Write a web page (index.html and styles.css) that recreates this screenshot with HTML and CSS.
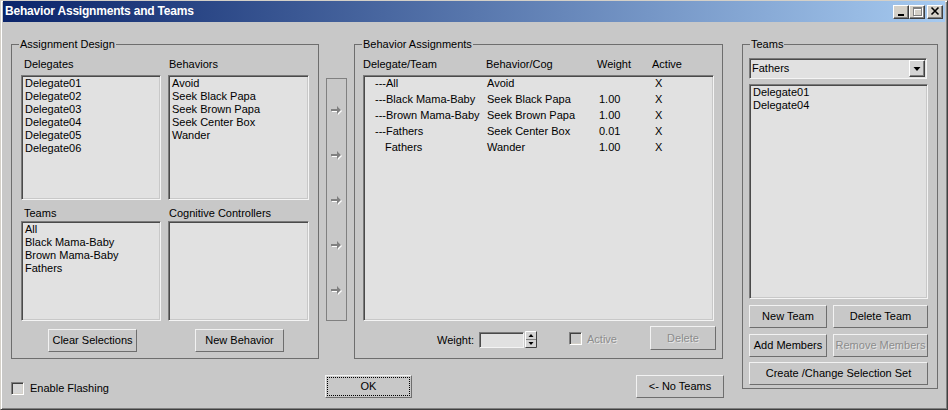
FILE: index.html
```html
<!DOCTYPE html>
<html>
<head>
<meta charset="utf-8">
<title>Behavior Assignments and Teams</title>
<link rel="stylesheet" href="styles.css">
</head>
<body>
<div class="window">
  <div class="titlebar">
    <span class="title">Behavior Assignments and Teams</span>
    <div class="tb-buttons">
      <span class="tbtn"><svg width="14" height="12" viewBox="0 0 14 12"><rect x="4" y="8" width="6" height="2" fill="#000"/></svg></span>
      <span class="tbtn"><svg width="14" height="12" viewBox="0 0 14 12"><path d="M4 2h9v9H4z M5 4v6h7V4z" fill="#fff" fill-rule="evenodd"/><path d="M3 1h9v9H3z M4 3v6h7V3z" fill="#808080" fill-rule="evenodd"/></svg></span>
      <span class="tbtn tclose"><svg width="14" height="12" viewBox="0 0 14 12"><path d="M3.5 1.5L10.5 8.5M10.5 1.5L3.5 8.5" stroke="#000" stroke-width="1.6"/></svg></span>
    </div>
  </div>

  <div class="content">
    <section class="group design">
      <div class="gtitle">Assignment Design</div>
      <div class="gbody design-body">
        <div class="design-grid">
          <div class="cell c1">
            <div class="lbl">Delegates</div>
            <div class="listbox tall">
              <div>Delegate01</div><div>Delegate02</div><div>Delegate03</div>
              <div>Delegate04</div><div>Delegate05</div><div>Delegate06</div>
            </div>
          </div>
          <div class="cell c2">
            <div class="lbl">Behaviors</div>
            <div class="listbox tall">
              <div>Avoid</div><div>Seek Black Papa</div><div>Seek Brown Papa</div>
              <div>Seek Center Box</div><div>Wander</div>
            </div>
          </div>
          <div class="cell c1 low">
            <div class="lbl">Teams</div>
            <div class="listbox short">
              <div>All</div><div>Black Mama-Baby</div><div>Brown Mama-Baby</div><div>Fathers</div>
            </div>
          </div>
          <div class="cell c2 low">
            <div class="lbl">Cognitive Controllers</div>
            <div class="listbox short"></div>
          </div>
          <div class="bcell"><button class="btn dbtn">Clear Selections</button></div>
          <div class="bcell"><button class="btn dbtn">New Behavior</button></div>
        </div>
      </div>
    </section>

    <div class="arrows">
      <div class="arrow"><svg width="11" height="9" viewBox="0 0 11 9"><path d="M1 4h6V1l4 4-4 4V6H1z" fill="#fff"/><path d="M0 3h6V0l4 4-4 4V5H0z" fill="#808080"/></svg></div>
      <div class="arrow"><svg width="11" height="9" viewBox="0 0 11 9"><path d="M1 4h6V1l4 4-4 4V6H1z" fill="#fff"/><path d="M0 3h6V0l4 4-4 4V5H0z" fill="#808080"/></svg></div>
      <div class="arrow"><svg width="11" height="9" viewBox="0 0 11 9"><path d="M1 4h6V1l4 4-4 4V6H1z" fill="#fff"/><path d="M0 3h6V0l4 4-4 4V5H0z" fill="#808080"/></svg></div>
      <div class="arrow"><svg width="11" height="9" viewBox="0 0 11 9"><path d="M1 4h6V1l4 4-4 4V6H1z" fill="#fff"/><path d="M0 3h6V0l4 4-4 4V5H0z" fill="#808080"/></svg></div>
      <div class="arrow"><svg width="11" height="9" viewBox="0 0 11 9"><path d="M1 4h6V1l4 4-4 4V6H1z" fill="#fff"/><path d="M0 3h6V0l4 4-4 4V5H0z" fill="#808080"/></svg></div>
    </div>

    <section class="group assign">
      <div class="gtitle">Behavior Assignments</div>
      <div class="gbody assign-body">
        <div class="thead">
          <span>Delegate/Team</span><span>Behavior/Cog</span><span>Weight</span><span>Active</span>
        </div>
        <div class="listbox lv">
          <div class="lvrow"><span>---All</span><span>Avoid</span><span></span><span>X</span></div>
          <div class="lvrow"><span>---Black Mama-Baby</span><span>Seek Black Papa</span><span>1.00</span><span>X</span></div>
          <div class="lvrow"><span>---Brown Mama-Baby</span><span>Seek Brown Papa</span><span>1.00</span><span>X</span></div>
          <div class="lvrow"><span>---Fathers</span><span>Seek Center Box</span><span>0.01</span><span>X</span></div>
          <div class="lvrow"><span class="ind">Fathers</span><span>Wander</span><span>1.00</span><span>X</span></div>
        </div>
        <div class="actrow">
          <span class="wlabel">Weight:</span>
          <span class="winput"></span>
          <span class="spin"><svg width="12" height="17" viewBox="0 0 12 17"><rect width="12" height="17" fill="#d4d4d4"/><path d="M0.5 16.5V0.5H11.5" stroke="#fff" fill="none"/><path d="M0.5 16.5H11.5V0.5" stroke="#404040" fill="none"/><path d="M1 8.5H11" stroke="#808080"/><path d="M3.5 6h5L6 3z" fill="#000"/><path d="M3.5 11h5L6 14z" fill="#000"/></svg></span>
          <span class="chk dis"></span>
          <span class="alabel">Active</span>
          <button class="btn delbtn" disabled>Delete</button>
        </div>
      </div>
    </section>

    <section class="group teams">
      <div class="gtitle">Teams</div>
      <div class="gbody teams-body">
        <div class="combo">
          <span class="ctext">Fathers</span>
          <span class="cbtn"><svg width="14" height="15" viewBox="0 0 14 15"><path d="M3.5 6h7L7 10z" fill="#000"/></svg></span>
        </div>
        <div class="listbox tlist">
          <div>Delegate01</div><div>Delegate04</div>
        </div>
        <div class="tbtns">
          <button class="btn">New Team</button>
          <button class="btn">Delete Team</button>
          <button class="btn">Add Members</button>
          <button class="btn" disabled>Remove Members</button>
          <button class="btn wide">Create /Change Selection Set</button>
        </div>
      </div>
    </section>

    <div class="bottombar">
      <div class="flash"><span class="chk"></span><span class="flabel">Enable Flashing</span></div>
      <button class="btn okbtn">OK</button>
      <span class="spacer"></span>
      <button class="btn noteams">&lt;- No Teams</button>
    </div>
  </div>
</div>
</body>
</html>
```

FILE: styles.css
```css
html, body {
  margin: 0;
  padding: 0;
  background: #c8c8c8;
}

body {
  font-family: "Liberation Sans", Arial, sans-serif;
  font-size: 11px;
  line-height: 13px;
  color: #000;
}

.window {
  width: 948px;
  height: 410px;
  box-sizing: border-box;
  border: 1px solid;
  border-color: #d4d0c8 #404040 #404040 #d4d0c8;
  box-shadow: inset 1px 1px #ffffff, inset -1px -1px #808080;
  padding: 0 2px 2px 2px;
  background: #c8c8c8;
  display: flex;
  flex-direction: column;
}

/* title bar */
.titlebar {
  height: 21px;
  flex: none;
  display: flex;
  align-items: flex-start;
  background: linear-gradient(to right, #0a246a, #a6caf0);
  color: #fff;
}

.title {
  font-weight: bold;
  font-size: 12px;
  line-height: 21px;
  padding-left: 2px;
  letter-spacing: -0.2px;
}

.tb-buttons {
  margin-left: auto;
  margin-top: 4px;
  margin-right: 2px;
  display: flex;
}

.tbtn {
  display: block;
  width: 16px;
  height: 14px;
  box-sizing: border-box;
  background: #d4d0c8;
  border: 1px solid;
  border-color: #fff #404040 #404040 #fff;
  box-shadow: inset -1px -1px #808080;
}

.tbtn svg { display: block; }

.tclose { margin-left: 2px; }

/* main layout */
.content {
  flex: 1;
  min-height: 0;
  display: grid;
  grid-template-columns: 308px 35px 369px 1fr;
  grid-template-rows: 315px 1fr;
  padding: 22px 0 0 8px;
}

.group {
  border: 1px solid #6e6e6e;
  box-sizing: border-box;
}

.gtitle {
  width: max-content;
  height: 13px;
  margin: -7px 0 -6px 7px;
  padding: 0 1px;
  background: #c8c8c8;
}

/* assignment design */
.design {
  grid-column: 1;
  grid-row: 1;
}

.design-body {
  padding: 13px 0 0 9px;
}

.design-grid {
  display: grid;
  grid-template-columns: 140px 141px;
  column-gap: 7px;
}

.cell .lbl { margin-bottom: 4px; }
.cell.low { margin-top: 7px; }
.cell.low .lbl { margin-bottom: 1px; }
.c1 .lbl { padding-left: 3px; }
.c2 .lbl { padding-left: 1px; }

.listbox {
  box-sizing: border-box;
  border: 1px solid;
  border-color: #7a7a7a #f4f4f4 #f4f4f4 #7a7a7a;
  box-shadow: inset 1px 1px #4a4a4a, inset -1px -1px #c8c8c8;
  background: #e1e1e1;
  padding: 1px 3px;
  white-space: nowrap;
}

.tall { height: 125px; }
.short { height: 100px; }

.bcell {
  margin-top: 8px;
  padding-left: 27px;
}

.btn {
  font-family: inherit;
  font-size: 11px;
  line-height: 13px;
  color: #000;
  background: #c8c8c8;
  border: 1px solid;
  border-color: #f2f2f2 #6e6e6e #6e6e6e #f2f2f2;
  padding: 0;
  margin: 0;
  box-sizing: border-box;
  display: block;
  white-space: nowrap;
}

.btn:disabled {
  color: #8c8c8c;
  text-shadow: 1px 1px #e6e6e6;
}

.dbtn {
  width: 89px;
  height: 23px;
}

/* arrows */
.arrows {
  grid-column: 2;
  grid-row: 1;
  align-self: start;
  margin: 34px 0 0 7px;
  width: 21px;
  height: 243px;
  box-sizing: border-box;
  border: 1px solid #808080;
  padding-top: 9px;
  display: flex;
  flex-direction: column;
  align-items: center;
}

.arrow {
  height: 45px;
  display: flex;
  align-items: center;
}

.arrow svg { display: block; }

/* behavior assignments */
.assign {
  grid-column: 3;
  grid-row: 1;
}

.assign-body {
  padding: 13px 8px 0 8px;
}

.thead {
  display: grid;
  grid-template-columns: 123px 111px 55px auto;
  margin-bottom: 4px;
}

.lv {
  height: 246px;
  padding: 1px 0 0 11px;
}

.lvrow {
  display: grid;
  grid-template-columns: 112px 112px 56px auto;
  height: 16px;
}

.lvrow .ind { padding-left: 10px; }

.actrow {
  display: flex;
  align-items: flex-start;
  margin: 5px -2px 0 0;
}

.wlabel {
  width: 42px;
  margin: 8px 0 0 74px;
}

.winput {
  width: 45px;
  height: 16px;
  margin-top: 6px;
  box-sizing: border-box;
  border: 1px solid;
  border-color: #7a7a7a #f4f4f4 #f4f4f4 #7a7a7a;
  box-shadow: inset 1px 1px #4a4a4a;
  background: #e1e1e1;
}

.spin {
  margin: 5px 0 0 1px;
  width: 12px;
  height: 17px;
}

.spin svg { display: block; }

.chk {
  display: block;
  width: 13px;
  height: 13px;
  box-sizing: border-box;
  border: 1px solid;
  border-color: #808080 #ffffff #ffffff #808080;
  box-shadow: inset 1px 1px #404040, inset -1px -1px #d4d0c8;
  background: #d6d6d6;
  flex: none;
}

.chk.dis {
  margin: 6px 0 0 32px;
  background: #c8c8c8;
}

.alabel {
  margin: 7px 0 0 5px;
  color: #8c8c8c;
  text-shadow: 1px 1px #e6e6e6;
}

.delbtn {
  margin-left: auto;
  width: 66px;
  height: 24px;
}

/* teams */
.teams {
  grid-column: 4;
  grid-row: 1 / span 2;
  align-self: start;
  margin-left: 19px;
  width: 196px;
  height: 345px;
}

.teams-body {
  padding: 13px 9px 0 6px;
}

.combo {
  width: 178px;
  height: 21px;
  box-sizing: border-box;
  border: 1px solid;
  border-color: #7a7a7a #f4f4f4 #f4f4f4 #7a7a7a;
  box-shadow: inset 1px 1px #4a4a4a;
  background: #e1e1e1;
  padding: 1px;
  display: flex;
  align-items: stretch;
}

.ctext {
  flex: 1;
  padding-left: 1px;
  line-height: 17px;
}

.cbtn {
  width: 16px;
  box-sizing: border-box;
  background: #d4d4d4;
  border: 1px solid;
  border-color: #fff #404040 #404040 #fff;
  box-shadow: inset -1px -1px #808080;
}

.cbtn svg { display: block; }

.tlist {
  height: 215px;
  margin-top: 5px;
}

.tbtns {
  display: grid;
  grid-template-columns: 78px 95px;
  grid-template-rows: 23px 23px 23px;
  column-gap: 6px;
  row-gap: 6px;
  margin-top: 6px;
}

.tbtns .btn { height: 23px; }

.tbtns .wide {
  grid-column: 1 / span 2;
  margin-top: -1px;
}

/* bottom bar */
.bottombar {
  grid-column: 1 / 4;
  grid-row: 2;
  display: flex;
  align-items: flex-start;
  padding-top: 16px;
}

.flash {
  width: 314px;
  margin-top: 7px;
  display: flex;
  align-items: center;
}

.flabel { margin-left: 6px; }

.okbtn {
  width: 87px;
  height: 23px;
  outline: 1px dotted #000;
  outline-offset: -3px;
}

.spacer { flex: 1; }

.noteams {
  width: 88px;
  height: 23px;
  margin-right: -1px;
}
```
